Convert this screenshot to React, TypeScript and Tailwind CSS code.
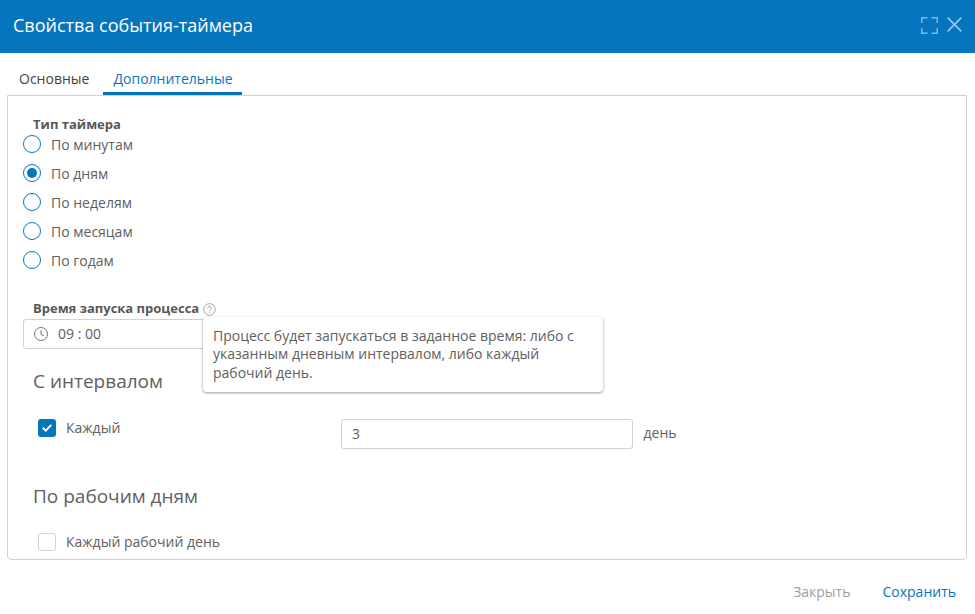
const types = ['По минутам', 'По дням', 'По неделям', 'По месяцам', 'По годам'];

export default function App() {
  return (
    <div className="flex h-[614px] w-[975px] flex-col overflow-hidden bg-white font-['Open_Sans',sans-serif] text-[14px] leading-[20px] text-[#606060]">
      <header className="flex h-[53px] shrink-0 items-center justify-between bg-[#0575bd] px-[13px] pb-[3px] text-white">
        <h1 className="text-[18px] leading-[24px]">Свойства события-таймера</h1>
        <div className="flex items-center gap-[9px]">
          <svg width="17" height="17" viewBox="0 0 17 17" fill="none" stroke="#82bade" strokeWidth="1.5"><path d="M.75 6V.75H6.5M10.5 .75H16.25V6M16.25 11V16.25H10.5M6.5 16.25H.75V11" /></svg>
          <svg className="-mt-[1px]" width="15" height="15" viewBox="0 0 15 15" fill="none" stroke="#9bc8e4" strokeWidth="1.6"><path d="M.6 .6L14.4 14.4M14.4 .6L.6 14.4" /></svg>
        </div>
      </header>
      <nav className="flex h-[42px] shrink-0 items-end pl-[8px]">
        <div className="h-[26px] w-[95px] pl-[11px] text-[#444]">Основные</div>
        <div className="h-[26px] w-[139px] border-b-[3px] border-[#0575bd] pl-[1px] text-center text-[#0575bd]">Дополнительные</div>
      </nav>
      <main className="ml-[7px] mr-[8px] flex h-[465px] shrink-0 flex-col rounded-b-[4px] border border-[#d1d1d1] pl-[15px]">
        <div className="mt-[18px] h-[20px] pl-[10px] text-[13px] font-bold text-[#585858]">Тип таймера</div>
        <div className="flex flex-col">
          {types.map((label, i) => (
            <label key={label} className="flex h-[29px] items-start gap-[10px]">
              <span className="mt-[1px] flex size-[18px] items-center justify-center rounded-full border border-[#0575bd]">
                {i === 1 && <span className="size-[10px] rounded-full bg-[#0575bd]" />}
              </span>
              <span className="mt-[1px]">{label}</span>
            </label>
          ))}
        </div>
        <div className="mt-[19px] flex h-[20px] items-center gap-[4px] pl-[10px] text-[13px] font-bold text-[#585858]">
          Время запуска процесса
          <svg className="mt-[2px]" width="13" height="13" viewBox="0 0 13 13" fill="none" stroke="#999" strokeWidth=".9"><circle cx="6.5" cy="6.5" r="5.8" /><path d="M4.8 5a1.7 1.7 0 1 1 2.5 1.5c-.6.3-.8.6-.8 1.2M6.5 8.8v1" /></svg>
        </div>
        <div className="relative mt-[1px] flex h-[30px] w-[292px] items-center gap-[10px] rounded-[3px] border border-[#d1d1d1] pl-[10px]">
          <svg width="14" height="14" viewBox="0 0 14 14" fill="none" stroke="#777"><circle cx="7" cy="7" r="6.5" /><path d="M7 3v4.3l3 1.5" /></svg>
          <span>09 : 00</span>
          <div className="absolute left-[179px] top-[-3px] h-[75px] w-[400px] rounded-[4px] bg-white px-[10px] pt-[10px] shadow-[0_1px_3px_rgba(0,0,0,0.4)]">
            <div className="leading-[18px]">Процесс будет запускаться в заданное время: либо с</div>
            <div className="leading-[18px]">указанным дневным интервалом, либо каждый</div>
            <div className="leading-[20px]">рабочий день.</div>
          </div>
        </div>
        <h2 className="mt-[19px] h-[26px] pl-[10px] text-[19px] leading-[26px]">С интервалом</h2>
        <div className="mt-[25px] flex h-[30px] items-center pl-[15px]">
          <span className="-mt-[12px] flex size-[18px] items-center justify-center rounded-[3px] bg-[#0575bd]">
            <svg width="10" height="8" viewBox="0 0 10 8" fill="none" stroke="white" strokeWidth="1.9"><path d="M.8 3.8L3.8 6.6L9.2 1" /></svg>
          </span>
          <span className="-mt-[12px] ml-[10px] w-[275px]">Каждый</span>
          <div className="flex h-[30px] w-[292px] items-center rounded-[3px] border border-[#d1d1d1] pl-[10px]">3</div>
          <span className="-mt-[2px] ml-[10.5px]">день</span>
        </div>
        <h2 className="mt-[34px] h-[26px] pl-[10px] text-[19px] leading-[26px]">По рабочим дням</h2>
        <div className="mt-[23px] flex h-[20px] items-center gap-[10px] pl-[15px]">
          <span className="size-[18px] rounded-[3px] border border-[#d1d1d1]" />Каждый рабочий день
        </div>
      </main>
      <footer className="flex h-[54px] items-center justify-end gap-[32px] pr-[19px] pt-[10px]">
        <span className="text-[#a0a0a0]">Закрыть</span><span className="text-[#0575bd]">Сохранить</span>
      </footer>
    </div>
  );
}
